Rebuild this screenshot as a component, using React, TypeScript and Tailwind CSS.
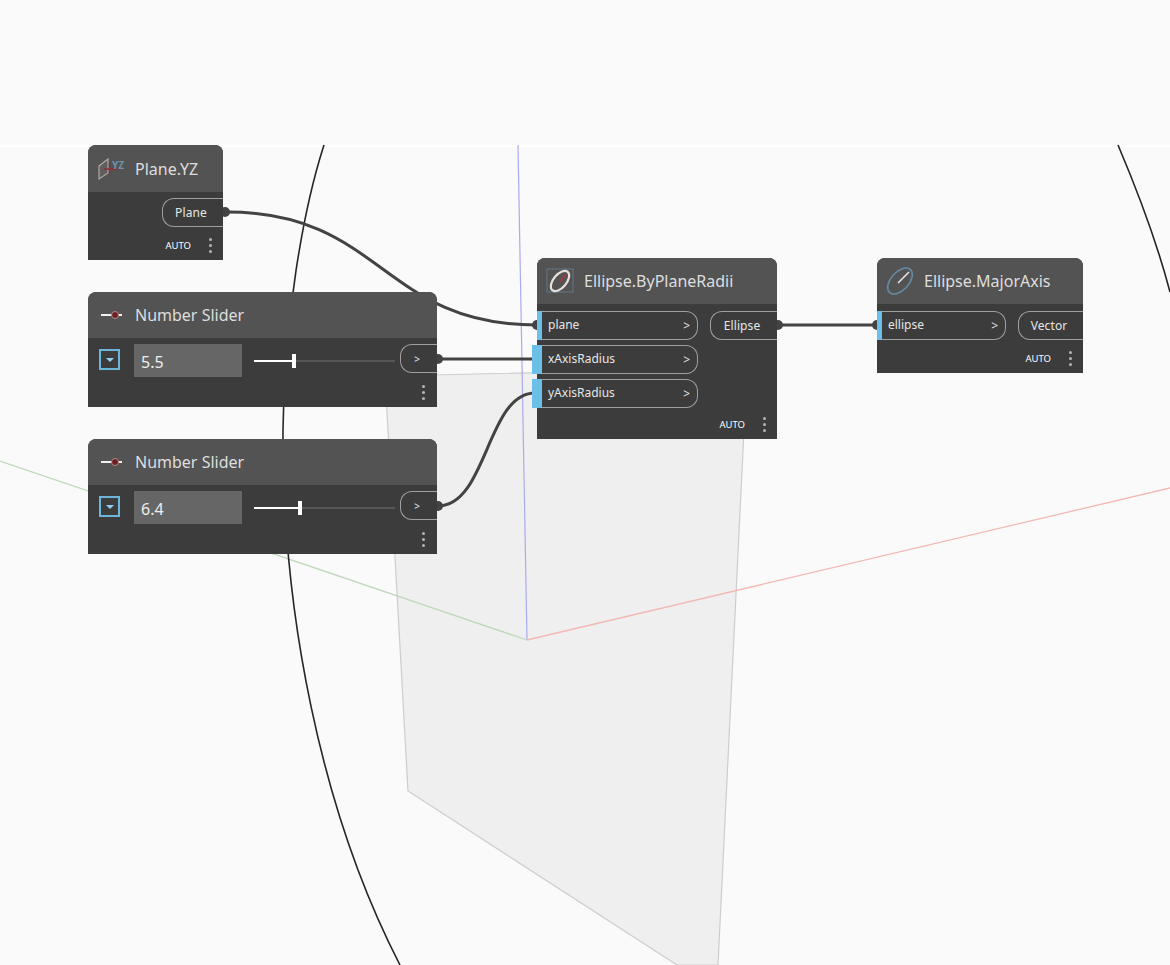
const font = "font-['Noto_Sans',sans-serif]";

const Dots = () => (
  <div className="flex flex-col gap-[3px]">
    <span className="size-[3px] rounded-full bg-[#b4b4b4]" />
    <span className="size-[3px] rounded-full bg-[#b4b4b4]" />
    <span className="size-[3px] rounded-full bg-[#b4b4b4]" />
  </div>
);

const Footer = () => (
  <div className="flex items-center justify-end">
    <span className="text-[9.5px] leading-none text-white">AUTO</span>
    <div className="ml-[18px] mr-[11px]">
      <Dots />
    </div>
  </div>
);

const Header = ({ icon, title, className = "h-[46px]" }: { icon: React.ReactNode; title: string; className?: string }) => (
  <div className={`flex shrink-0 items-center rounded-t-[8px] bg-[#535353] ${className}`}>
    <div className="flex w-[47px] shrink-0 justify-center">{icon}</div>
    <span className="text-[16px] leading-none text-[#dedede]">{title}</span>
  </div>
);

const InPort = ({ name, wired, width = "w-[161px]" }: { name: string; wired?: boolean; width?: string }) => (
  <div className={`relative flex h-[29px] items-center justify-between rounded-r-[12px] border border-l-0 border-[#a0a0a0] pl-[11px] pr-[7px] ${width}`}>
    {wired && <span className="absolute -left-[5px] -top-px h-[29px] w-[5px] bg-[#6cbfe6]" />}
    <span className="absolute left-0 -top-px h-[29px] w-[5px] bg-[#6cbfe6]" />
    <span className="-mt-[2px] text-[12px] leading-none text-[#e6e6e6]">{name}</span>
    <span className="text-[12px] leading-none text-[#e6e6e6]">&gt;</span>
  </div>
);

const OutPort = ({ name, width }: { name: string; width: string }) => (
  <div className={`flex h-[29px] items-center justify-center rounded-l-[12px] border border-r-0 border-[#a0a0a0] pr-[4px] ${width}`}>
    <span className="text-[12px] leading-none tracking-[0.1px] text-[#e6e6e6]">{name}</span>
  </div>
);

const SliderIcon = () => (
  <svg width="24" height="12" viewBox="0 0 24 12">
    <path d="M1 6H22" stroke="#f0f0f0" strokeWidth="2" />
    <circle cx="15" cy="6" r="3.5" fill="#6b1f24" stroke="#b78a8a" strokeWidth="1" />
  </svg>
);

const PlaneIcon = () => (
  <svg width="28" height="24" viewBox="0 0 28 24">
    <path d="M1 9L10 2V16L1 22Z" fill="#5e5e5e" stroke="#b3a8a8" strokeWidth="1.2" />
    <path d="M11.500 6V18M6 12H22" stroke="#8f2f35" strokeWidth="1.3" />
    <text x="14" y="12" fontSize="10" fontWeight="700" fill="#6d93ab" fontFamily="Noto Sans">YZ</text>
  </svg>
);

const EllipseIcon = () => (
  <svg width="28" height="28" viewBox="0 0 28 28" className="-ml-[2px]">
    <rect x="1" y="2" width="26" height="23" fill="none" stroke="#62788a" strokeWidth="1" />
    <ellipse cx="14" cy="14" rx="6.500" ry="12" transform="rotate(40 14 14)" fill="none" stroke="#e6dfdc" strokeWidth="2.200" />
    <path d="M14 15L20 7" stroke="#a03a42" strokeWidth="2" />
  </svg>
);

const MajorAxisIcon = () => (
  <svg width="30" height="30" viewBox="0 0 30 30" className="-ml-[2px]">
    <ellipse cx="15" cy="15" rx="9" ry="15.500" transform="rotate(42 15 15)" fill="none" stroke="#64879d" strokeWidth="1.800" />
    <path d="M13 17L24 6" stroke="#e4e4e4" strokeWidth="1.600" />
  </svg>
);

const Slider = ({ value, filled, thumb, top }: { value: string; filled: string; thumb: string; top: string }) => (
  <div className={`absolute left-[88px] flex h-[115px] w-[349px] flex-col overflow-hidden rounded-t-[8px] bg-[#3c3c3c] ${top}`}>
    <Header icon={<SliderIcon />} title="Number Slider" />
    <div className="mt-[6px] flex h-[33px] items-center">
      <div className="ml-[11px] -mt-[2px] flex size-[21px] items-center justify-center border-2 border-[#6cb6dc]">
        <span className="mt-px border-x-[4px] border-t-[4px] border-x-transparent border-t-[#8fd0ef]" />
      </div>
      <div className="ml-[14px] flex h-[33px] w-[108px] items-center bg-[#666666] pl-[7px] pt-[2px] text-[16px] leading-none text-[#eeeeee]">
        {value}
      </div>
      <div className="relative ml-[12px] h-[2px] w-[141px] bg-[#565656]">
        <div className={`h-[2px] bg-white ${filled}`} />
        <div className={`absolute -top-[6px] h-[14px] w-[4px] bg-white ${thumb}`} />
      </div>
      <div className="mb-[4px] ml-[5px] flex h-[29px] w-[37px] items-center justify-center rounded-l-[12px] border border-r-0 border-[#a0a0a0] pr-[4px] text-[10px] leading-none text-[#e6e6e6]">
        &gt;
      </div>
    </div>
    <div className="mt-[8px] flex justify-end pr-[12px]">
      <Dots />
    </div>
  </div>
);

export default function App() {
  return (
    <div className={`relative h-[965px] w-[1170px] overflow-hidden bg-[#fafafa] ${font}`}>
      <svg width="1170" height="965" viewBox="0 0 1170 965" className="absolute left-0 top-0">
        <path d="M0 146H1170" stroke="#ffffff" strokeWidth="2" />
        {/* grey plane */}
        <path d="M385 376L747 368L718 965H677L408 791Z" fill="#efefef" stroke="#cdcdcd" strokeWidth="1.200" />
        {/* axes */}
        <path d="M518 145L527 640" stroke="#aaaaf0" strokeWidth="1.200" />
        <path d="M0 461L527 640" stroke="#c0d8bc" strokeWidth="1.300" />
        <path d="M527 640L1170 488" stroke="#f2b8b4" strokeWidth="1.300" />
        {/* black curves */}
        <path d="M324 145C303 210 284 320 283 430C282 610 320 810 400 965" fill="none" stroke="#262626" strokeWidth="1.600" />
        <path d="M1118 145C1135 185 1155 235 1170 292" fill="none" stroke="#262626" strokeWidth="1.600" />
        {/* wires */}
        <g fill="none" stroke="#434343" strokeWidth="3">
          <path d="M227 212C382 212 382 325 537 325" />
          <path d="M437 359H535" />
          <path d="M438 506C487 506 487 393 535 393" />
          <path d="M778 325H877" />
        </g>
        <g fill="#434343">
          <circle cx="225" cy="212" r="5" />
          <circle cx="537" cy="325" r="5" />
          <circle cx="438" cy="359" r="5" />
          <circle cx="438" cy="506" r="5" />
          <circle cx="778" cy="325" r="5" />
          <circle cx="877" cy="325" r="5" />
        </g>
      </svg>

      {/* Plane.YZ */}
      <div className="absolute left-[88px] top-[145px] flex h-[115px] w-[135px] flex-col rounded-t-[8px] bg-[#3c3c3c]">
        <Header icon={<PlaneIcon />} title="Plane.YZ" className="h-[47px]" />
        <div className="mt-[6px] flex justify-end">
          <OutPort name="Plane" width="w-[61px]" />
        </div>
        <div className="mt-[11px]">
          <Footer />
        </div>
      </div>

      <Slider value="5.5" filled="w-[39px]" thumb="left-[38px]" top="top-[292px]" />
      <Slider value="6.4" filled="w-[45px]" thumb="left-[44px]" top="top-[439px]" />

      {/* Ellipse.ByPlaneRadii */}
      <div className="absolute left-[537px] top-[258px] flex h-[181px] w-[240px] flex-col rounded-t-[8px] bg-[#3c3c3c]">
        <Header icon={<EllipseIcon />} title="Ellipse.ByPlaneRadii" />
        <div className="mt-[7px] flex items-start justify-between">
          <div className="flex flex-col gap-[5px]">
            <InPort name="plane" />
            <InPort name="xAxisRadius" wired />
            <InPort name="yAxisRadius" wired />
          </div>
          <OutPort name="Ellipse" width="w-[67px]" />
        </div>
        <div className="mt-[9px]">
          <Footer />
        </div>
      </div>

      {/* Ellipse.MajorAxis */}
      <div className="absolute left-[877px] top-[258px] flex h-[115px] w-[206px] flex-col rounded-t-[8px] bg-[#3c3c3c]">
        <Header icon={<MajorAxisIcon />} title="Ellipse.MajorAxis" />
        <div className="mt-[7px] flex items-start justify-between">
          <InPort name="ellipse" width="w-[129px]" />
          <OutPort name="Vector" width="w-[65px]" />
        </div>
        <div className="mt-[11px]">
          <Footer />
        </div>
      </div>
    </div>
  );
}
